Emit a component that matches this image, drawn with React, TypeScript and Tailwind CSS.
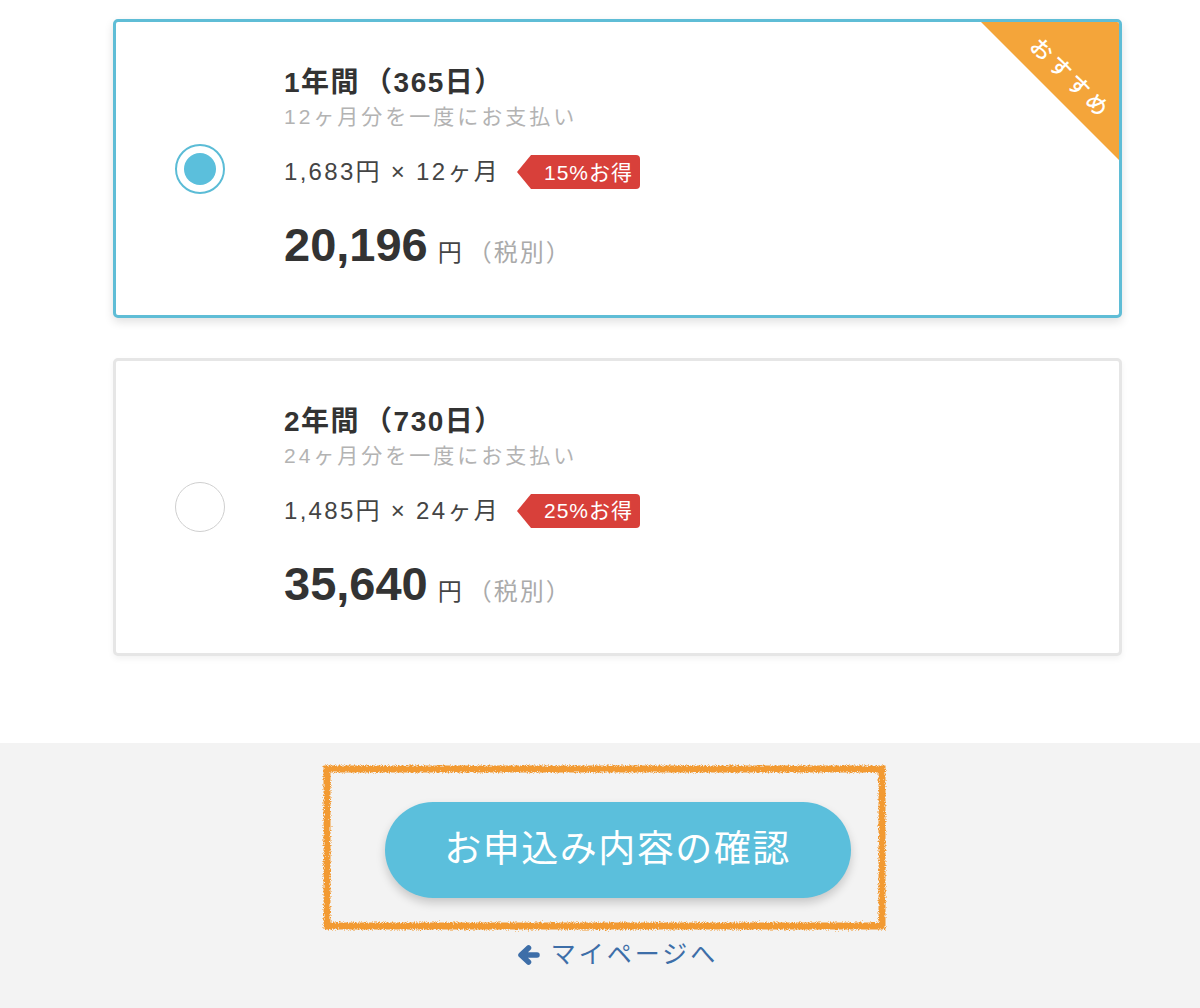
const plans = [
  {
    id: '1y',
    name: '1年間',
    days: '365日',
    note: '12ヶ月分を一度にお支払い',
    monthly: '1,683円 × 12ヶ月',
    discount: '15%お得',
    total: '20,196',
    selected: true,
    recommended: true,
  },
  {
    id: '2y',
    name: '2年間',
    days: '730日',
    note: '24ヶ月分を一度にお支払い',
    monthly: '1,485円 × 24ヶ月',
    discount: '25%お得',
    total: '35,640',
    selected: false,
    recommended: false,
  },
];

type Plan = (typeof plans)[number];

function Radio({ checked }: { checked: boolean }) {
  if (checked) {
    return (
      <span className="flex h-[50px] w-[50px] flex-shrink-0 items-center justify-center rounded-full border-2 border-[#5bbcd6] bg-white">
        <span className="h-[32px] w-[32px] rounded-full bg-[#5bbfdc]" />
      </span>
    );
  }
  return <span className="h-[50px] w-[50px] flex-shrink-0 rounded-full border-[1.5px] border-[#cfcfcf] bg-white" />;
}

function DiscountTag({ label }: { label: string }) {
  return (
    <span className="ml-[17px] flex h-[34px] items-stretch">
      <span className="h-0 w-0 self-center border-y-[17px] border-r-[14px] border-y-transparent border-r-[#d8403a]" />
      <span className="flex items-center rounded-r-[4px] bg-[#d8403a] pl-[13px] pr-[7px] text-[21px] leading-none tracking-[1px] text-white">
        {label}
      </span>
    </span>
  );
}

function BackArrow() {
  return (
    <svg width="23" height="22" viewBox="0 0 23 22" fill="none" aria-hidden="true">
      <path
        d="M20 11H5M11.5 4 4 11l7.5 7"
        stroke="currentColor"
        strokeWidth="5.5"
        strokeLinecap="round"
        strokeLinejoin="round"
      />
    </svg>
  );
}

function PlanCard({ plan }: { plan: Plan }) {
  return (
    <label
      className={
        plan.selected
          ? 'relative flex h-[299px] cursor-pointer items-center gap-[59px] overflow-hidden rounded-[5px] border-[3px] border-[#5fbdd6] bg-white pl-[59px] shadow-[0_4px_10px_rgba(0,0,0,0.12)]'
          : 'relative flex h-[298px] cursor-pointer items-center gap-[59px] overflow-hidden rounded-[5px] border-[3px] border-[#e6e6e6] bg-white pl-[59px] shadow-[0_3px_6px_rgba(0,0,0,0.05)]'
      }
    >
      <Radio checked={plan.selected} />

      <div className="flex flex-col">
        <h3 className="text-[28px] font-bold leading-[30px] tracking-[1.5px] text-[#333]">
          {plan.name}
          <span className="ml-[4px]">（{plan.days}）</span>
        </h3>
        <p className="mt-[7px] text-[21px] leading-[24px] tracking-[3px] text-[#b3b3b3]">{plan.note}</p>
        <div className="mt-[26px] flex h-[34px] items-center">
          <span className="text-[24px] leading-none tracking-[2.3px] text-[#444]">{plan.monthly}</span>
          <DiscountTag label={plan.discount} />
        </div>
        <div className="mt-[32px] flex h-[48px] items-baseline">
          <span className="text-[47px] font-bold leading-none text-[#333]">{plan.total}</span>
          <span className="ml-[10px] text-[24px] text-[#444]">円</span>
          <span className="ml-[6px] text-[24px] tracking-[2px] text-[#aaa]">（税別）</span>
        </div>
      </div>

      {plan.recommended && (
        <span className="absolute right-0 top-0 h-[138px] w-[138px] bg-[#f4a53a] [clip-path:polygon(0_0,100%_0,100%_100%)]" aria-hidden="true">
          <span className="absolute left-[89px] top-[57px] -translate-x-1/2 -translate-y-1/2 rotate-45 whitespace-nowrap text-[22px] font-medium leading-none tracking-[4px] text-white">
            おすすめ
          </span>
        </span>
      )}
    </label>
  );
}

export default function App() {
  return (
    <div className="min-h-[1008px] bg-white font-['Liberation_Sans','Noto_Sans_CJK_JP',sans-serif]">
      <section className="pb-[87px] pt-[19px]">
        <div className="ml-[113px] flex w-[1009px] flex-col gap-[40px]">
          {plans.map((plan) => (
            <PlanCard key={plan.id} plan={plan} />
          ))}
        </div>
      </section>

      <section className="relative h-[265px] bg-[#f3f3f3] pt-[59px]">
        <div className="ml-[113px] flex w-[1009px] flex-col items-center">
          <button
            type="button"
            className="h-[96px] w-[466px] rounded-full bg-[#5bbfdc] text-[37px] tracking-[1.5px] text-white shadow-[0_5px_10px_rgba(0,0,0,0.18)]"
          >
            お申込み内容の確認
          </button>
          <a href="#" className="mt-[42px] flex h-[30px] items-center gap-[11px] text-[25px] tracking-[3px] text-[#3d6ea8]">
            <BackArrow />
            マイページへ
          </a>
        </div>

        {/* hand-drawn highlight around the CTA */}
        <svg className="pointer-events-none absolute left-[322px] top-[21px]" width="566" height="168" aria-hidden="true">
          <defs>
            <filter id="rough" x="-5%" y="-10%" width="110%" height="120%">
              <feTurbulence type="fractalNoise" baseFrequency="0.8" numOctaves="2" seed="3" />
              <feDisplacementMap in="SourceGraphic" scale="5" />
            </filter>
          </defs>
          <rect x="5" y="5" width="555" height="157" fill="none" stroke="#f29a30" strokeWidth="7" filter="url(#rough)" />
        </svg>
      </section>
    </div>
  );
}
